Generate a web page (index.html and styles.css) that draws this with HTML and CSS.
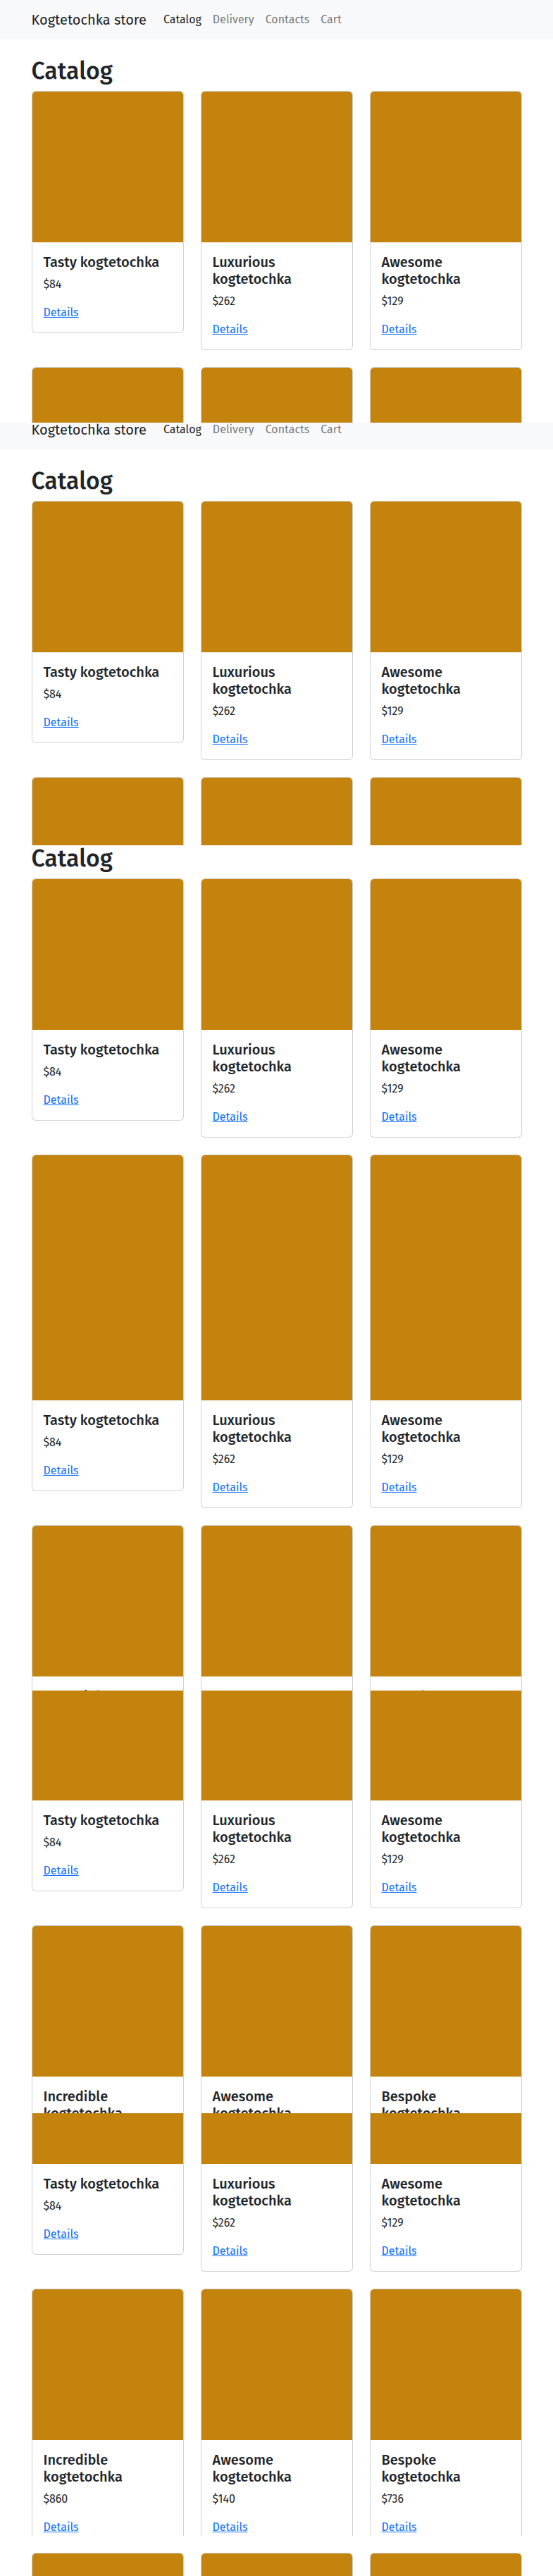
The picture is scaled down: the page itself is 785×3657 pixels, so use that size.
FILE: index.html
```html
<!DOCTYPE html>
<html lang="en">
<head>
<meta charset="utf-8">
<title>Kogtetochka store</title>
<link rel="stylesheet" href="styles.css">
</head>
<body>

<!-- capture 1 -->
<section class="shot shot-a">
  <div class="page">
    <nav class="navbar"><div class="nav-inner"><a class="brand" href="#">Kogtetochka store</a><ul class="nav-links"><li><a class="nav-link active" href="#">Catalog</a></li><li><a class="nav-link" href="#">Delivery</a></li><li><a class="nav-link" href="#">Contacts</a></li><li><a class="nav-link" href="#">Cart</a></li></ul></div></nav>
    <main class="main">
      <h1 class="page-title">Catalog</h1>
      <div class="grid">
        <div class="card"><div class="card-img"></div><div class="card-body"><h5 class="card-title">Tasty kogtetochka</h5><p class="card-price">$84</p><a class="card-link" href="#">Details</a></div></div>
        <div class="card"><div class="card-img"></div><div class="card-body"><h5 class="card-title">Luxurious kogtetochka</h5><p class="card-price">$262</p><a class="card-link" href="#">Details</a></div></div>
        <div class="card"><div class="card-img"></div><div class="card-body"><h5 class="card-title">Awesome kogtetochka</h5><p class="card-price">$129</p><a class="card-link" href="#">Details</a></div></div>
        <div class="card"><div class="card-img"></div><div class="card-body"><h5 class="card-title">Incredible kogtetochka</h5><p class="card-price">$860</p><a class="card-link" href="#">Details</a></div></div>
        <div class="card"><div class="card-img"></div><div class="card-body"><h5 class="card-title">Awesome kogtetochka</h5><p class="card-price">$140</p><a class="card-link" href="#">Details</a></div></div>
        <div class="card"><div class="card-img"></div><div class="card-body"><h5 class="card-title">Bespoke kogtetochka</h5><p class="card-price">$736</p><a class="card-link" href="#">Details</a></div></div>
      </div>
    </main>
  </div>
</section>

<!-- capture 2 -->
<section class="shot shot-b">
  <div class="page">
    <nav class="navbar"><div class="nav-inner"><a class="brand" href="#">Kogtetochka store</a><ul class="nav-links"><li><a class="nav-link active" href="#">Catalog</a></li><li><a class="nav-link" href="#">Delivery</a></li><li><a class="nav-link" href="#">Contacts</a></li><li><a class="nav-link" href="#">Cart</a></li></ul></div></nav>
    <main class="main">
      <h1 class="page-title">Catalog</h1>
      <div class="grid">
        <div class="card"><div class="card-img"></div><div class="card-body"><h5 class="card-title">Tasty kogtetochka</h5><p class="card-price">$84</p><a class="card-link" href="#">Details</a></div></div>
        <div class="card"><div class="card-img"></div><div class="card-body"><h5 class="card-title">Luxurious kogtetochka</h5><p class="card-price">$262</p><a class="card-link" href="#">Details</a></div></div>
        <div class="card"><div class="card-img"></div><div class="card-body"><h5 class="card-title">Awesome kogtetochka</h5><p class="card-price">$129</p><a class="card-link" href="#">Details</a></div></div>
        <div class="card"><div class="card-img"></div><div class="card-body"><h5 class="card-title">Incredible kogtetochka</h5><p class="card-price">$860</p><a class="card-link" href="#">Details</a></div></div>
        <div class="card"><div class="card-img"></div><div class="card-body"><h5 class="card-title">Awesome kogtetochka</h5><p class="card-price">$140</p><a class="card-link" href="#">Details</a></div></div>
        <div class="card"><div class="card-img"></div><div class="card-body"><h5 class="card-title">Bespoke kogtetochka</h5><p class="card-price">$736</p><a class="card-link" href="#">Details</a></div></div>
      </div>
    </main>
  </div>
</section>

<!-- capture 3 -->
<section class="shot shot-c">
  <div class="page">
    <nav class="navbar"><div class="nav-inner"><a class="brand" href="#">Kogtetochka store</a><ul class="nav-links"><li><a class="nav-link active" href="#">Catalog</a></li><li><a class="nav-link" href="#">Delivery</a></li><li><a class="nav-link" href="#">Contacts</a></li><li><a class="nav-link" href="#">Cart</a></li></ul></div></nav>
    <main class="main">
      <h1 class="page-title">Catalog</h1>
      <div class="grid">
        <div class="card"><div class="card-img"></div><div class="card-body"><h5 class="card-title">Tasty kogtetochka</h5><p class="card-price">$84</p><a class="card-link" href="#">Details</a></div></div>
        <div class="card"><div class="card-img"></div><div class="card-body"><h5 class="card-title">Luxurious kogtetochka</h5><p class="card-price">$262</p><a class="card-link" href="#">Details</a></div></div>
        <div class="card"><div class="card-img"></div><div class="card-body"><h5 class="card-title">Awesome kogtetochka</h5><p class="card-price">$129</p><a class="card-link" href="#">Details</a></div></div>
        <div class="card"><div class="card-img card-img-tall"></div><div class="card-body"><h5 class="card-title">Tasty kogtetochka</h5><p class="card-price">$84</p><a class="card-link" href="#">Details</a></div></div>
        <div class="card"><div class="card-img card-img-tall"></div><div class="card-body"><h5 class="card-title">Luxurious kogtetochka</h5><p class="card-price">$262</p><a class="card-link" href="#">Details</a></div></div>
        <div class="card"><div class="card-img card-img-tall"></div><div class="card-body"><h5 class="card-title">Awesome kogtetochka</h5><p class="card-price">$129</p><a class="card-link" href="#">Details</a></div></div>
        <div class="card"><div class="card-img"></div><div class="card-body"><h5 class="card-title">Incredible kogtetochka</h5><p class="card-price">$860</p><a class="card-link" href="#">Details</a></div></div>
        <div class="card"><div class="card-img"></div><div class="card-body"><h5 class="card-title">Awesome kogtetochka</h5><p class="card-price">$140</p><a class="card-link" href="#">Details</a></div></div>
        <div class="card"><div class="card-img"></div><div class="card-body"><h5 class="card-title">Bespoke kogtetochka</h5><p class="card-price">$736</p><a class="card-link" href="#">Details</a></div></div>
      </div>
    </main>
  </div>
</section>

<!-- capture 4 -->
<section class="shot shot-d">
  <div class="page">
    <nav class="navbar"><div class="nav-inner"><a class="brand" href="#">Kogtetochka store</a><ul class="nav-links"><li><a class="nav-link active" href="#">Catalog</a></li><li><a class="nav-link" href="#">Delivery</a></li><li><a class="nav-link" href="#">Contacts</a></li><li><a class="nav-link" href="#">Cart</a></li></ul></div></nav>
    <main class="main">
      <h1 class="page-title">Catalog</h1>
      <div class="grid">
        <div class="card"><div class="card-img"></div><div class="card-body"><h5 class="card-title">Tasty kogtetochka</h5><p class="card-price">$84</p><a class="card-link" href="#">Details</a></div></div>
        <div class="card"><div class="card-img"></div><div class="card-body"><h5 class="card-title">Luxurious kogtetochka</h5><p class="card-price">$262</p><a class="card-link" href="#">Details</a></div></div>
        <div class="card"><div class="card-img"></div><div class="card-body"><h5 class="card-title">Awesome kogtetochka</h5><p class="card-price">$129</p><a class="card-link" href="#">Details</a></div></div>
        <div class="card"><div class="card-img"></div><div class="card-body"><h5 class="card-title">Incredible kogtetochka</h5><p class="card-price">$860</p><a class="card-link" href="#">Details</a></div></div>
        <div class="card"><div class="card-img"></div><div class="card-body"><h5 class="card-title">Awesome kogtetochka</h5><p class="card-price">$140</p><a class="card-link" href="#">Details</a></div></div>
        <div class="card"><div class="card-img"></div><div class="card-body"><h5 class="card-title">Bespoke kogtetochka</h5><p class="card-price">$736</p><a class="card-link" href="#">Details</a></div></div>
      </div>
    </main>
  </div>
</section>

<!-- capture 5 -->
<section class="shot shot-e">
  <div class="page">
    <nav class="navbar"><div class="nav-inner"><a class="brand" href="#">Kogtetochka store</a><ul class="nav-links"><li><a class="nav-link active" href="#">Catalog</a></li><li><a class="nav-link" href="#">Delivery</a></li><li><a class="nav-link" href="#">Contacts</a></li><li><a class="nav-link" href="#">Cart</a></li></ul></div></nav>
    <main class="main">
      <h1 class="page-title">Catalog</h1>
      <div class="grid">
        <div class="card"><div class="card-img"></div><div class="card-body"><h5 class="card-title">Tasty kogtetochka</h5><p class="card-price">$84</p><a class="card-link" href="#">Details</a></div></div>
        <div class="card"><div class="card-img"></div><div class="card-body"><h5 class="card-title">Luxurious kogtetochka</h5><p class="card-price">$262</p><a class="card-link" href="#">Details</a></div></div>
        <div class="card"><div class="card-img"></div><div class="card-body"><h5 class="card-title">Awesome kogtetochka</h5><p class="card-price">$129</p><a class="card-link" href="#">Details</a></div></div>
        <div class="card"><div class="card-img"></div><div class="card-body"><h5 class="card-title">Incredible kogtetochka</h5><p class="card-price">$860</p><a class="card-link" href="#">Details</a></div></div>
        <div class="card"><div class="card-img"></div><div class="card-body"><h5 class="card-title">Awesome kogtetochka</h5><p class="card-price">$140</p><a class="card-link" href="#">Details</a></div></div>
        <div class="card"><div class="card-img"></div><div class="card-body"><h5 class="card-title">Bespoke kogtetochka</h5><p class="card-price">$736</p><a class="card-link" href="#">Details</a></div></div>
      </div>
    </main>
  </div>
</section>

<!-- capture 6 -->
<section class="shot shot-f">
  <div class="page">
    <nav class="navbar"><div class="nav-inner"><a class="brand" href="#">Kogtetochka store</a><ul class="nav-links"><li><a class="nav-link active" href="#">Catalog</a></li><li><a class="nav-link" href="#">Delivery</a></li><li><a class="nav-link" href="#">Contacts</a></li><li><a class="nav-link" href="#">Cart</a></li></ul></div></nav>
    <main class="main">
      <h1 class="page-title">Catalog</h1>
      <div class="grid">
        <div class="card"><div class="card-img"></div><div class="card-body"><h5 class="card-title">Tasty kogtetochka</h5><p class="card-price">$84</p><a class="card-link" href="#">Details</a></div></div>
        <div class="card"><div class="card-img"></div><div class="card-body"><h5 class="card-title">Luxurious kogtetochka</h5><p class="card-price">$262</p><a class="card-link" href="#">Details</a></div></div>
        <div class="card"><div class="card-img"></div><div class="card-body"><h5 class="card-title">Awesome kogtetochka</h5><p class="card-price">$129</p><a class="card-link" href="#">Details</a></div></div>
        <div class="card"><div class="card-img"></div><div class="card-body"><h5 class="card-title">Incredible kogtetochka</h5><p class="card-price">$860</p><a class="card-link" href="#">Details</a></div></div>
        <div class="card"><div class="card-img"></div><div class="card-body"><h5 class="card-title">Awesome kogtetochka</h5><p class="card-price">$140</p><a class="card-link" href="#">Details</a></div></div>
        <div class="card"><div class="card-img"></div><div class="card-body"><h5 class="card-title">Bespoke kogtetochka</h5><p class="card-price">$736</p><a class="card-link" href="#">Details</a></div></div>
        <div class="card"><div class="card-img"></div><div class="card-body"><h5 class="card-title">Tasty kogtetochka</h5><p class="card-price">$84</p><a class="card-link" href="#">Details</a></div></div>
        <div class="card"><div class="card-img"></div><div class="card-body"><h5 class="card-title">Luxurious kogtetochka</h5><p class="card-price">$262</p><a class="card-link" href="#">Details</a></div></div>
        <div class="card"><div class="card-img"></div><div class="card-body"><h5 class="card-title">Awesome kogtetochka</h5><p class="card-price">$129</p><a class="card-link" href="#">Details</a></div></div>
      </div>
    </main>
  </div>
</section>

</body>
</html>
```
FILE: styles.css
```css
* { box-sizing: border-box; }

html, body {
  margin: 0;
  padding: 0;
  background: #fff;
}

body {
  font-family: "Fira Sans", Lato, "DejaVu Sans Condensed", sans-serif;
  font-size: 16px;
  line-height: 1.5;
  color: #212529;
}

/* each stitched capture of the page */
.shot {
  overflow: hidden;
  background: #fff;
}
.shot-a { height: 600px; }
.shot-a .page { margin-top: 0; }
.shot-b { height: 600px; }
.shot-b .page { margin-top: -18px; }
.shot-c { height: 1200px; }
.shot-c .page { margin-top: -82px; }
.shot-d { height: 600px; }
.shot-d .page { margin-top: -188px; }
.shot-e { height: 600px; }
.shot-e .page { margin-top: -272px; }
.shot-f { height: 57px; }
.shot-f .page { margin-top: -889px; }

/* navbar */
.navbar {
  background: #f8f9fa;
  height: 56px;
  display: flex;
  align-items: center;
}
.nav-inner {
  width: 696px;
  margin: 0 auto;
  display: flex;
  align-items: center;
}
.brand {
  font-size: 20px;
  line-height: 30px;
  color: rgba(0, 0, 0, 0.9);
  text-decoration: none;
  margin-right: 16px;
}
.nav-links {
  list-style: none;
  margin: 0;
  padding: 0;
  display: flex;
}
.nav-link {
  display: block;
  padding: 8px;
  line-height: 24px;
  color: rgba(0, 0, 0, 0.55);
  text-decoration: none;
}
.nav-link.active { color: rgba(0, 0, 0, 0.9); }

/* content */
.main {
  width: 696px;
  margin: 0 auto;
  padding-top: 24px;
}
.page-title {
  margin: 0 0 8px;
  font-size: 33.775px;
  line-height: 41px;
  font-weight: 500;
}
.grid {
  display: grid;
  grid-template-columns: repeat(3, 1fr);
  column-gap: 24px;
  row-gap: 24px;
  align-items: start;
}
.card {
  background: #fff;
  border: 1px solid rgba(0, 0, 0, 0.175);
  border-radius: 6px;
  display: flex;
  flex-direction: column;
}
.card-img {
  height: 214px;
  background: #c4830d;
  border-radius: 5px 5px 0 0;
}
.card-img-tall { height: 348px; }
.card-body { padding: 16px; }
.card-title {
  margin: 0 0 8px;
  font-size: 20px;
  line-height: 24px;
  font-weight: 500;
}
.card-price { margin: 0 0 16px; }
.card-link {
  color: #0d6efd;
  text-decoration: underline;
}
```
